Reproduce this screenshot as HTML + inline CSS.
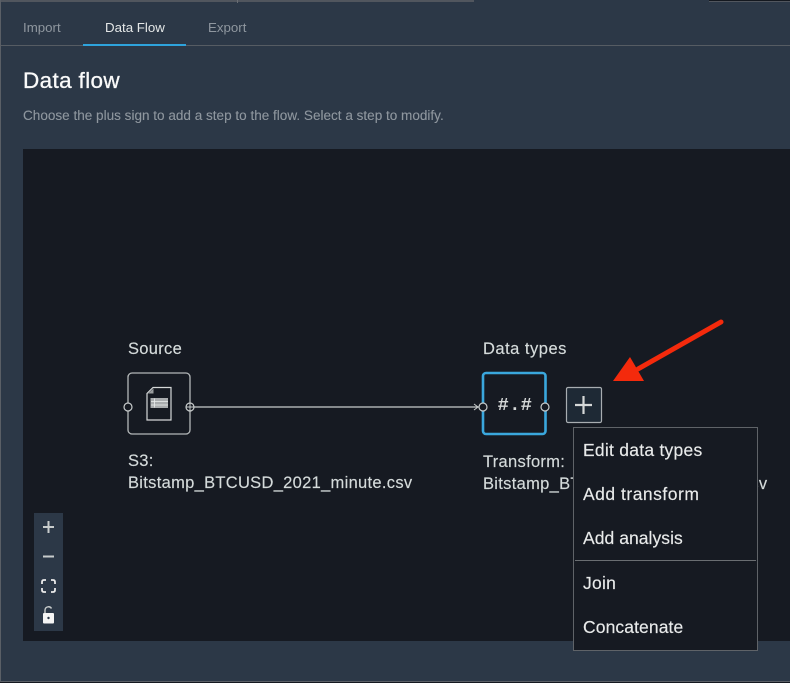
<!DOCTYPE html>
<html><head><meta charset="utf-8"><style>
html,body{margin:0;padding:0;background:#2c3847}
body{width:790px;height:683px;position:relative;overflow:hidden;font-family:"Liberation Sans",sans-serif}
div,span{position:absolute;white-space:nowrap}
.t{font-size:16.5px;line-height:20px;color:#d5dbdb;letter-spacing:.3px;-webkit-text-stroke:.15px #d5dbdb}
.m{font-size:17.5px;line-height:20px;color:#e8eaea;left:583px;letter-spacing:.25px;-webkit-text-stroke:.15px #e8eaea}
</style></head><body>
<div style="left:0;top:0;width:474px;height:2px;background:#51565e"></div>
<div style="left:237px;top:0;width:1px;height:3px;background:#6a6e74"></div>
<div style="left:709px;top:0;width:81px;height:1px;background:#14181f"></div>
<div style="left:709px;top:1px;width:81px;height:1px;background:#51565e"></div>
<div style="left:0;top:0;width:1px;height:683px;background:#5a5f66"></div>
<div style="left:0;top:681px;width:790px;height:1px;background:#5a5f66"></div>
<div style="left:0;top:682px;width:790px;height:1px;background:#14181f"></div>
<div style="left:1px;top:45px;width:789px;height:1px;background:#565c63"></div>
<div style="left:83px;top:44px;width:103px;height:1.5px;background:#2ea3dc"></div>
<div style="left:23px;top:19px;font-size:13.3px;line-height:17px;color:#8f979f">Import</div>
<div style="left:105px;top:19px;font-size:13.3px;line-height:17px;color:#e4e7e7">Data Flow</div>
<div style="left:208px;top:19px;font-size:13.3px;line-height:17px;color:#8f979f">Export</div>
<div style="left:23px;top:68px;font-size:22.5px;line-height:26px;color:#fafafa;letter-spacing:.35px;-webkit-text-stroke:.3px #fafafa">Data flow</div>
<div style="left:23px;top:108px;font-size:13.56px;line-height:16px;color:#8f979f;-webkit-text-stroke:.1px #8f979f">Choose the plus sign to add a step to the flow. Select a step to modify.</div>
<div style="left:23px;top:149px;width:767px;height:492px;background:#161a22"></div>

<div class="t" style="left:128px;top:339px">Source</div>
<div class="t" style="left:128px;top:451px">S3:</div>
<div class="t" style="left:128px;top:473px">Bitstamp_BTCUSD_2021_minute.csv</div>
<div class="t" style="left:483px;top:339px;letter-spacing:.5px">Data types</div>
<div class="t" style="left:483px;top:452px">Transform:</div>
<div class="t" style="left:483px;top:474px">Bitstamp_BTCUSD_2021_minute.csv</div>

<svg style="position:absolute;left:0;top:0" width="790" height="683" viewBox="0 0 790 683">
<path d="M190 407H482" stroke="#c8cccc" stroke-width="1.2" fill="none"/>
<path d="M474 404l4 3-4 3" stroke="#c8cccc" stroke-width="1" fill="none"/>
<rect x="128" y="373" width="62" height="61" rx="4" fill="#161a22" stroke="#b4b8b9" stroke-width="1.3"/>
<path d="M153 387.500H171V420H147V393.500Z" fill="none" stroke="#d5d8d8" stroke-width="1.200"/>
<path d="M148 393.500h5.500v-5z" fill="#9a9d9f"/>
<rect x="150.500" y="398" width="17.500" height="10" fill="#a9acae"/>
<path d="M151 401.500h17M151 405h17M154.500 398.500v9" stroke="#eceeee" stroke-width=".8"/>
<circle cx="128" cy="407" r="4" fill="#161a22" stroke="#c8cccc" stroke-width="1.2"/>
<circle cx="190" cy="407" r="4" fill="#161a22" stroke="#c8cccc" stroke-width="1.2"/>
<path d="M186 407h8M190 403v8" stroke="#c8cccc" stroke-width="1"/>
<rect x="483" y="373" width="62.500" height="61" rx="3" fill="#161a22" stroke="#3aa7dd" stroke-width="2.600"/>
<circle cx="483" cy="407" r="4" fill="#161a22" stroke="#c8cccc" stroke-width="1.2"/>
<circle cx="545" cy="407" r="4" fill="#161a22" stroke="#c8cccc" stroke-width="1.2"/>
<text x="515" y="410" text-anchor="middle" font-family="Liberation Mono,monospace" font-size="18.500" font-weight="700" fill="#d5d8d8" letter-spacing=".5">#.#</text>
<rect x="566.500" y="387.500" width="35" height="35" rx="1.500" fill="#1e2935" stroke="#a8adb1" stroke-width="1.2"/>
<path d="M583.500 396v18M575 405h17" stroke="#d5d8d8" stroke-width="2.200"/>
<path d="M721 322L638 369" stroke="#f42a0c" stroke-width="5" stroke-linecap="round"/>
<path d="M613 381L630 357L644 381Z" fill="#f42a0c"/>
<rect x="34" y="513" width="29" height="118" fill="#2c3847"/>
<path d="M48.500 521v12M43 527h11M43 556.500h11" stroke="#c8cccc" stroke-width="2" fill="none"/>
<path d="M42 584v-2q0-2 2-2h2M51 580h2q2 0 2 2v2M55 588v2q0 2-2 2h-2M46 592h-2q-2 0-2-2v-2" stroke="#eaeaea" stroke-width="1.800" fill="none"/>
<rect x="43" y="613" width="11" height="10.500" rx="1" fill="#f5f5f5"/>
<path d="M45 613v-3a3.500 3.500 0 0 1 6.500-1.500" stroke="#c8cccc" stroke-width="1.400" fill="none"/>
<circle cx="48.500" cy="618" r="1.200" fill="#2c3847"/>
</svg>

<div style="left:573px;top:427px;width:183px;height:222px;background:#161a22;border:1.500px solid #5f6368"></div>
<div style="left:575px;top:560px;width:181px;height:1px;background:#6a6e72"></div>
<div class="m" style="top:440px">Edit data types</div>
<div class="m" style="top:484px;letter-spacing:.5px">Add transform</div>
<div class="m" style="top:528px;letter-spacing:.05px">Add analysis</div>
<div class="m" style="top:573px">Join</div>
<div class="m" style="top:617px;letter-spacing:.1px">Concatenate</div>
</body></html>
